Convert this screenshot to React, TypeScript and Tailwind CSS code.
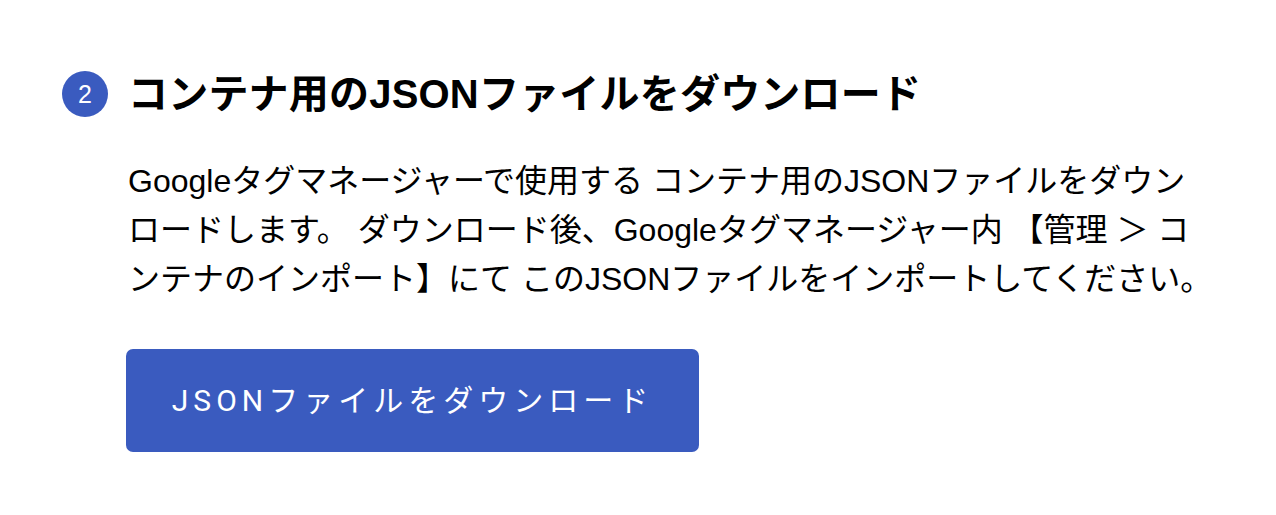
import React from "react";

export default function App() {
  return (
    <div className="min-h-[515px] w-full bg-white text-black" style={{ fontFamily: '"Liberation Sans", "Noto Sans CJK JP", sans-serif' }}>
      <div className="pl-[62px] pt-[71px]">
        <div className="flex items-center gap-[20px]">
          <div className="flex h-[46px] w-[46px] items-center justify-center rounded-full bg-[#3a5bbf] text-[25px] leading-none text-white" style={{ fontFamily: '"Liberation Sans", sans-serif' }}>
            2
          </div>
          <h2 className="text-[40px] font-bold leading-[46px] tracking-[0.2px]">
            コンテナ用のJSONファイルをダウンロード
          </h2>
        </div>
        <p className="ml-[66px] mt-[40px] w-[1110px] text-[32px] leading-[49px]">
          Googleタグマネージャーで使用する コンテナ用のJSONファイルをダウン
          <br />
          ロードします。 ダウンロード後、Googleタグマネージャー内 【管理 ＞ コ
          <br />
          ンテナのインポート】にて このJSONファイルをインポートしてください。
        </p>
        <button
          className="ml-[64px] mt-[45px] flex h-[103px] w-[573px] items-center justify-center rounded-[7px] bg-[#3a5bbf] text-[30px] tracking-[5px] text-white"
          style={{ fontFamily: 'Roboto, "Noto Sans CJK JP", sans-serif' }}
        >
          JSONファイルをダウンロード
        </button>
      </div>
    </div>
  );
}
